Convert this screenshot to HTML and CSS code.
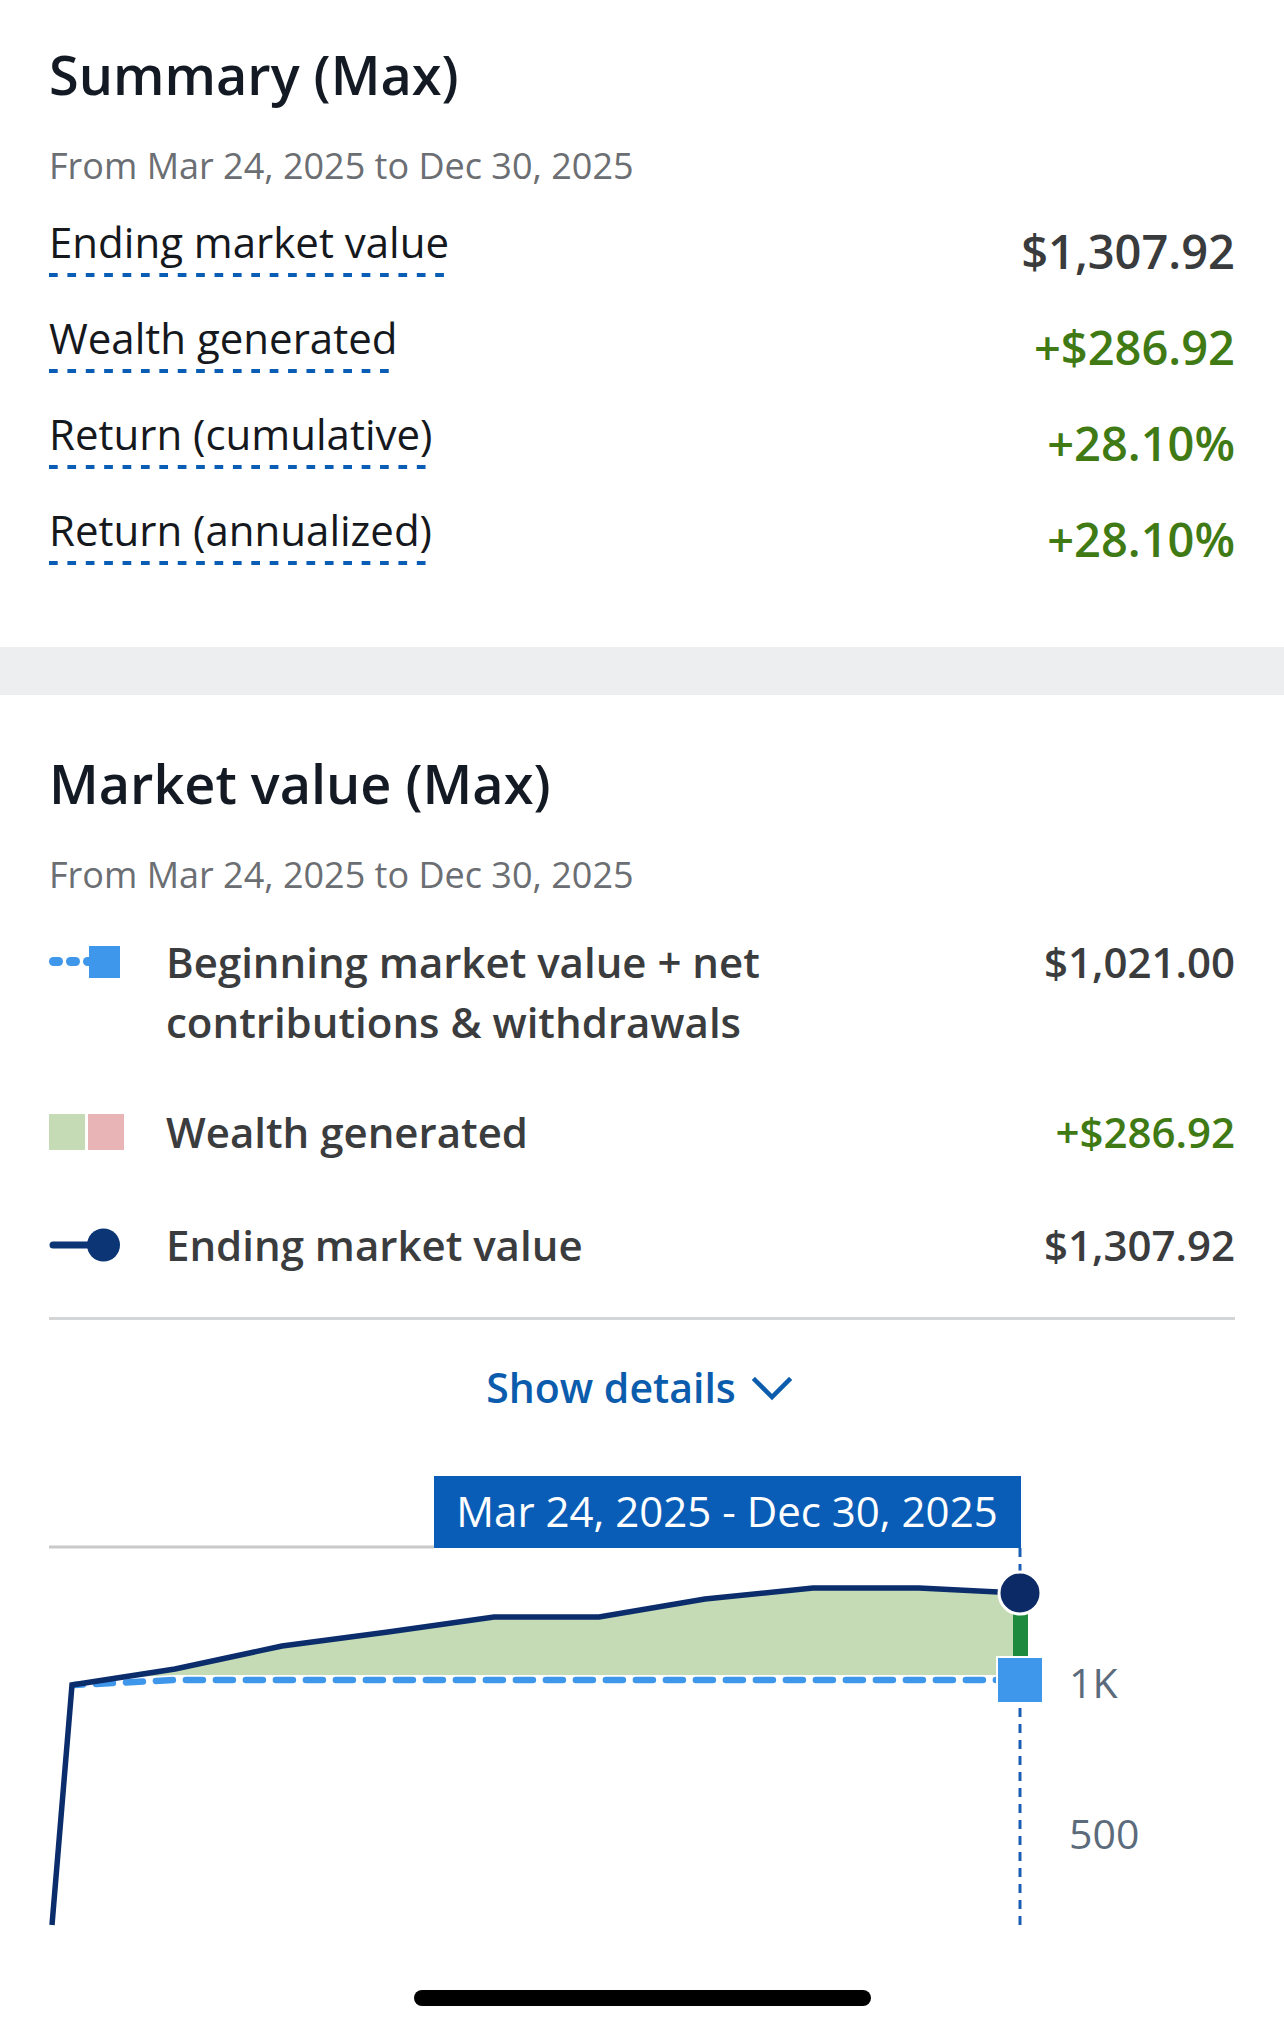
FILE: index.html
```html
<!DOCTYPE html>
<html lang="en">
<head>
<meta charset="utf-8">
<title>Summary</title>
<link rel="stylesheet" href="styles.css">
</head>
<body>
<main class="page">
  <section class="card summary">
    <h1 class="title">Summary (Max)</h1>
    <p class="range">From Mar 24, 2025 to Dec 30, 2025</p>
    <div class="rows">
      <div class="row"><span class="label">Ending market value</span><span class="value">$1,307.92</span></div>
      <div class="row"><span class="label">Wealth generated</span><span class="value pos">+$286.92</span></div>
      <div class="row"><span class="label">Return (cumulative)</span><span class="value pos">+28.10%</span></div>
      <div class="row"><span class="label">Return (annualized)</span><span class="value pos">+28.10%</span></div>
    </div>
  </section>

  <div class="band"></div>

  <section class="card market">
    <h2 class="title">Market value (Max)</h2>
    <p class="range">From Mar 24, 2025 to Dec 30, 2025</p>
    <div class="legend">
      <div class="legend-row first">
        <span class="icon">
          <svg width="72" height="34" viewBox="0 0 72 34">
            <rect x="0" y="12" width="14" height="9" rx="4.5" fill="#3f97ec"/>
            <rect x="17" y="12" width="14" height="9" rx="4.5" fill="#3f97ec"/>
            <rect x="34" y="12" width="14" height="9" rx="4.5" fill="#3f97ec"/>
            <rect x="40" y="1" width="31" height="32" fill="#3f97ec"/>
          </svg>
        </span>
        <span class="legend-label">Beginning market value + net contributions &amp; withdrawals</span>
        <span class="legend-value">$1,021.00</span>
      </div>
      <div class="legend-row second">
        <span class="icon">
          <svg width="76" height="36" viewBox="0 0 76 36">
            <rect x="0" y="0" width="36" height="36" fill="#c5dbb5"/>
            <rect x="39" y="0" width="36" height="36" fill="#e8b4b6"/>
          </svg>
        </span>
        <span class="legend-label">Wealth generated</span>
        <span class="legend-value pos">+$286.92</span>
      </div>
      <div class="legend-row third">
        <span class="icon">
          <svg width="72" height="34" viewBox="0 0 72 34">
            <line x1="4" y1="17" x2="50" y2="17" stroke="#0b3574" stroke-width="7" stroke-linecap="round"/>
            <circle cx="54.5" cy="17" r="16.5" fill="#0b3574"/>
          </svg>
        </span>
        <span class="legend-label">Ending market value</span>
        <span class="legend-value">$1,307.92</span>
      </div>
    </div>
    <hr class="divider">
    <button class="details" type="button">Show details
      <svg class="chev" width="40" height="24" viewBox="0 0 40 24"><polyline points="3,3 20,20 37,3" fill="none" stroke="#0b5cad" stroke-width="4.5" stroke-linecap="square" stroke-linejoin="miter"/></svg>
    </button>
  </section>

  <div class="chart">
    <svg width="1284" height="470" viewBox="0 0 1284 470">
      <line x1="49" y1="71" x2="434" y2="71" stroke="#c9c9c9" stroke-width="3"/>
      <polygon points="72,209 175,193 282,170 388,156 494,141 599,141 705,123 813,112 919,112 1020,117 1020,204 175,204" fill="#c5dbb5"/>
      <line x1="1020" y1="72" x2="1020" y2="452" stroke="#1a5fb4" stroke-width="3" stroke-dasharray="9 7"/>
      <polyline points="74,209 175,204 998,204" fill="none" stroke="#ffffff" stroke-width="10" stroke-linecap="round"/>
      <polyline points="74,209 175,204 998,204" fill="none" stroke="#3f97ec" stroke-width="6.5" stroke-dasharray="17 13" stroke-dashoffset="8" stroke-linecap="round"/>
      <polyline points="52,449 72,209 175,193 282,170 388,156 494,141 599,141 705,123 813,112 919,112 1020,117" fill="none" stroke="#0b2d6b" stroke-width="5.5" stroke-linejoin="miter"/>
      <rect x="1013" y="136" width="15" height="44" fill="#1e8a3e"/>
      <rect x="997" y="181" width="46" height="46" fill="#3f97ec" stroke="#ffffff" stroke-width="2"/>
      <circle cx="1020" cy="117" r="21" fill="#0b2a66" stroke="#ffffff" stroke-width="3"/>
      <rect x="434" y="0" width="587" height="72" fill="#0a5db7"/>
      <text x="727" y="51" class="tip-text" text-anchor="middle">Mar 24, 2025 - Dec 30, 2025</text>
      <text x="1069" y="222" class="axis-text">1K</text>
      <text x="1069" y="373" class="axis-text">500</text>
    </svg>
  </div>
</main>
<div class="home-indicator"></div>
</body>
</html>
```

FILE: styles.css
```css
* { box-sizing: border-box; }

html, body {
  margin: 0;
  padding: 0;
  background: #ffffff;
}

body {
  width: 1284px;
  height: 2029px;
  position: relative;
  overflow: hidden;
  font-family: "Open Sans", "Noto Sans", "DejaVu Sans", sans-serif;
  color: #1b1f27;
}

.page {
  display: flex;
  flex-direction: column;
}

.card {
  padding: 0 49px;
  display: flex;
  flex-direction: column;
}

.summary {
  padding-top: 38px;
  padding-bottom: 66px;
}

.title {
  margin: 0;
  font-size: 54px;
  line-height: 73px;
  font-weight: 600;
  color: #141a24;
}

.range {
  margin: 30px 0 0;
  font-size: 36px;
  line-height: 50px;
  color: #6b6e72;
  font-weight: 400;
}

.rows {
  margin-top: 6px;
  display: flex;
  flex-direction: column;
}

.row {
  height: 96px;
  display: flex;
  align-items: flex-start;
  justify-content: space-between;
}

.label {
  margin-top: 17px;
  font-size: 42px;
  line-height: 56px;
  padding-bottom: 7px;
  color: #15181d;
  background-image: linear-gradient(to right, #0a5db5 0, #0a5db5 9px, transparent 9px);
  background-size: 18.4px 4px;
  background-repeat: repeat-x;
  background-position: left bottom;
}

.value {
  margin-top: 25px;
  font-size: 47px;
  line-height: 58px;
  font-weight: 600;
  color: #3a3b3d;
}

.band {
  height: 48px;
  background: #eceef0;
}

.market {
  padding-top: 52px;
}

.legend {
  margin-top: 32px;
  display: flex;
  flex-direction: column;
}

.legend-row {
  display: flex;
  align-items: flex-start;
}

.legend-row.second {
  margin-top: 50px;
}

.legend-row.third {
  margin-top: 53px;
}

.icon {
  width: 117px;
  flex: none;
  height: 60px;
  display: flex;
  align-items: center;
}

.legend-label {
  flex: 1;
  max-width: 640px;
  font-size: 42px;
  line-height: 60px;
  font-weight: 600;
  color: #3b3c3e;
}

.legend-value {
  margin-left: auto;
  font-size: 42px;
  line-height: 60px;
  font-weight: 600;
  color: #3b3c3e;
}

.value.pos,
.legend-value.pos {
  color: #3f7a14;
}

.divider {
  margin: 42px 0 0;
  border: 0;
  height: 3px;
  background: #d4d5d7;
}

.details {
  margin: 38px auto 0;
  padding: 0;
  border: 0;
  background: none;
  font-family: inherit;
  font-size: 41px;
  line-height: 58px;
  font-weight: 600;
  color: #0b5cad;
  display: flex;
  align-items: center;
  gap: 16px;
  position: relative;
  left: -3px;
}

.chev {
  display: block;
  margin-top: 4px;
}

.chart {
  margin-top: 60px;
}

.chart svg {
  display: block;
}

.tip-text {
  font-family: "Open Sans", "Noto Sans", sans-serif;
  font-size: 42px;
  fill: #ffffff;
}

.axis-text {
  font-family: "Open Sans", "Noto Sans", sans-serif;
  font-size: 41px;
  fill: #5b6b7b;
}

.home-indicator {
  position: absolute;
  left: 414px;
  top: 1990px;
  width: 457px;
  height: 16px;
  border-radius: 8px;
  background: #000000;
}
```
